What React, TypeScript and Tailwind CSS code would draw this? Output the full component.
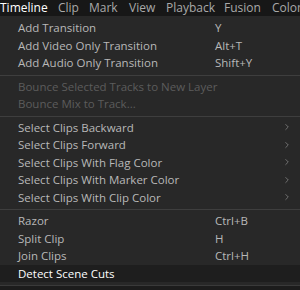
import { ChevronRight } from "lucide-react";

type Item = { label: string; shortcut?: string; sub?: boolean; disabled?: boolean; active?: boolean };

const groups: Item[][] = [
  [
    { label: "Add Transition", shortcut: "Y" },
    { label: "Add Video Only Transition", shortcut: "Alt+T" },
    { label: "Add Audio Only Transition", shortcut: "Shift+Y" },
  ],
  [
    { label: "Bounce Selected Tracks to New Layer", disabled: true },
    { label: "Bounce Mix to Track...", disabled: true },
  ],
  [
    { label: "Select Clips Backward", sub: true },
    { label: "Select Clips Forward", sub: true },
    { label: "Select Clips With Flag Color", sub: true },
    { label: "Select Clips With Marker Color", sub: true },
    { label: "Select Clips With Clip Color", sub: true },
  ],
  [
    { label: "Razor", shortcut: "Ctrl+B" },
    { label: "Split Clip", shortcut: "H" },
    { label: "Join Clips", shortcut: "Ctrl+H" },
    { label: "Detect Scene Cuts", active: true },
  ],
];

export default function App() {
  return (
    <div className="h-[290px] w-[300px] overflow-hidden bg-[#1c1c1c] font-['Open_Sans',sans-serif]">
      <div className="grid h-[16px] grid-cols-[58px_31px_40px_37px_58px_48px_28px] items-center overflow-hidden whitespace-nowrap bg-[#171717] text-[12px] leading-none text-[#a9a9a9]">
        <div className="text-white">Timeline</div>
        <div>Clip</div>
        <div>Mark</div>
        <div>View</div>
        <div>Playback</div>
        <div>Fusion</div>
        <div>Color</div>
      </div>
      <div className="bg-[#282828] pt-[3px]">
        {groups.map((group, gi) => (
          <div key={gi}>
            {gi > 0 && <div className="mb-[2px] mt-[3px] h-px bg-[#3e3e3e]" />}
            {group.map((item) => (
              <div
                key={item.label}
                className={`flex h-[17.5px] items-center pl-[18px] pr-[8px] text-[11.5px] ${
                  item.active ? "bg-[#1e1e1e] text-white" : item.disabled ? "text-[#5c5c5c]" : "text-[#b8b8b8]"
                }`}
              >
                <span className="w-[197px] whitespace-nowrap">{item.label}</span>
                <span className="flex-1">{item.shortcut}</span>
                {item.sub && <ChevronRight size={10} strokeWidth={1.5} className="text-[#9a9a9a]" />}
              </div>
            ))}
          </div>
        ))}
        <div className="h-[3px]" />
      </div>
      <div className="h-px bg-[#3a3a3a]" />
    </div>
  );
}
